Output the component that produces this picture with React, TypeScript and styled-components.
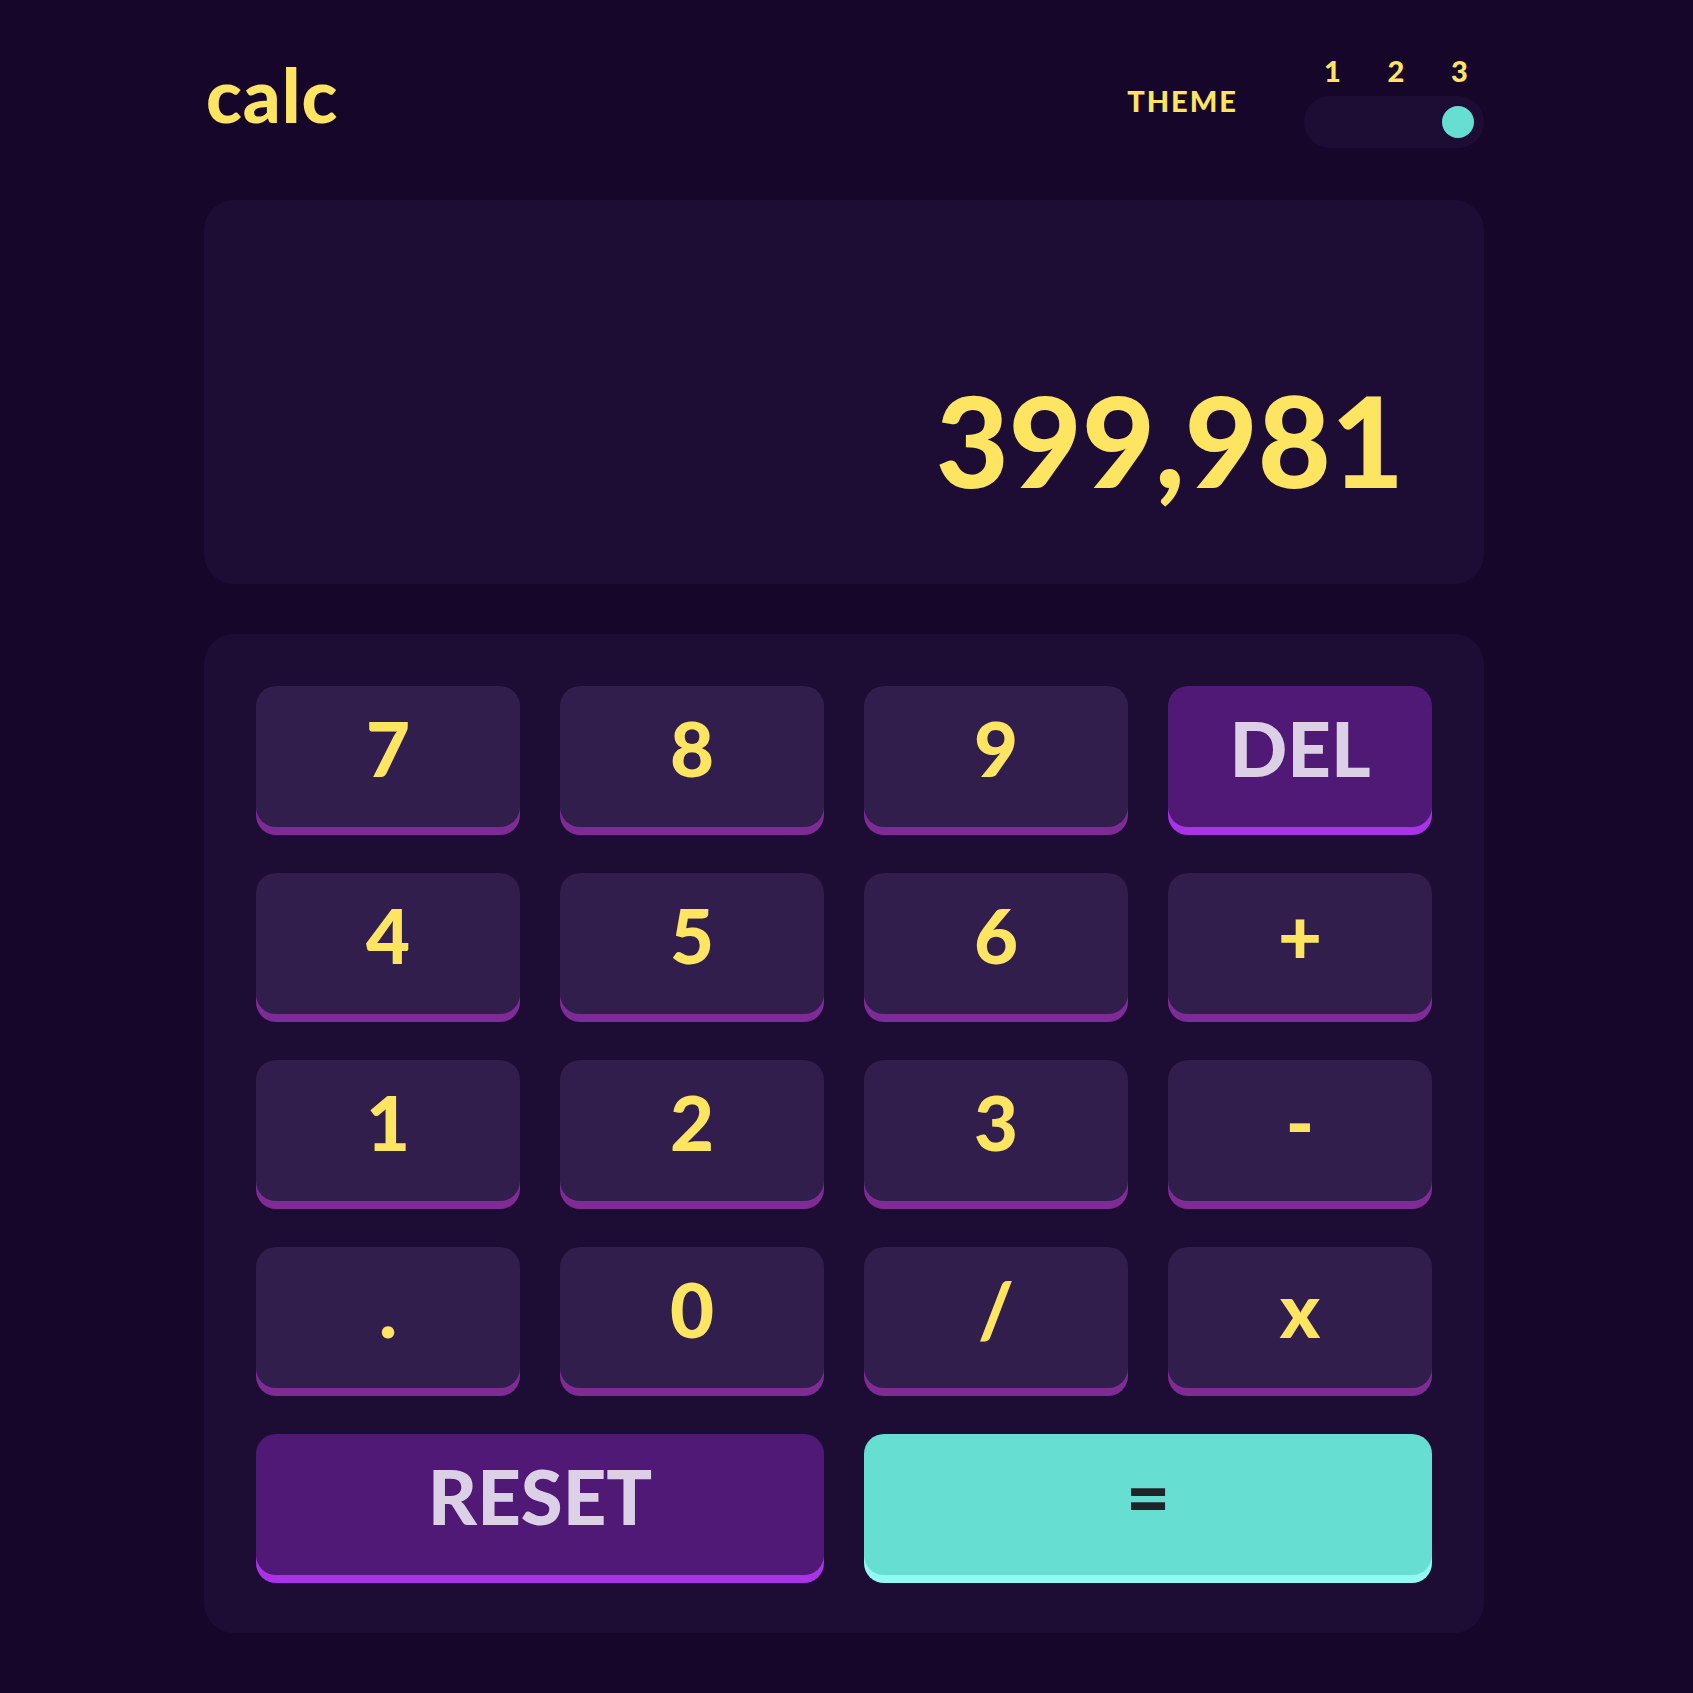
import React from "react";
import styled, { createGlobalStyle } from "styled-components";

const C = {
  page: "#16072a",
  panel: "#1d0c34",
  key: "#311e4c",
  keyShadow: "#7e2b96",
  accent: "#501975",
  accentShadow: "#aa33e8",
  accentText: "#dcd0e6",
  equals: "#66dfd2",
  equalsShadow: "#93f8f1",
  equalsText: "#1d2529",
  yellow: "#fde562",
};

const FONT = `"Lato", "Noto Sans", "Liberation Sans", sans-serif`;

const Global = createGlobalStyle`
  html, body { margin: 0; padding: 0; background: ${C.page}; }
  body { font-family: ${FONT}; }
  * { box-sizing: border-box; }
`;

const Page = styled.div`
  min-height: 1693px;
  background: ${C.page};
  padding: 48px 0 0 204px;
`;

const Calculator = styled.main`
  width: 1280px;
  display: flex;
  flex-direction: column;
`;

const Header = styled.header`
  display: flex;
  align-items: flex-end;
  justify-content: space-between;
  height: 100px;
  margin-bottom: 52px;
`;

const Logo = styled.h1`
  margin: 0 0 16px 2px;
  font-family: ${FONT};
  font-weight: 900;
  font-size: 74px;
  line-height: 1;
  letter-spacing: 1px;
  color: ${C.yellow};
`;

const ThemeGroup = styled.div`
  display: flex;
  align-items: flex-end;
  gap: 66px;
`;

const ThemeLabel = styled.span`
  margin-bottom: 33px;
  font-size: 29px;
  font-weight: 900;
  line-height: 1;
  letter-spacing: 2px;
  color: ${C.yellow};
`;

const Switcher = styled.div`
  display: flex;
  flex-direction: column;
  width: 180px;
`;

const NumRow = styled.div`
  display: flex;
  justify-content: space-between;
  padding: 0 17px 0 20px;
  margin-bottom: 11px;
`;

const Num = styled.span`
  width: 16px;
  text-align: center;
  font-size: 29px;
  font-weight: 900;
  line-height: 1;
  color: ${C.yellow};
`;

const Track = styled.div`
  height: 52px;
  border-radius: 26px;
  background: ${C.panel};
  display: flex;
  align-items: center;
  justify-content: flex-end;
  padding: 0 10px;
`;

const Knob = styled.span`
  width: 32px;
  height: 32px;
  border-radius: 50%;
  background: ${C.equals};
`;

const Screen = styled.section`
  height: 384px;
  border-radius: 30px;
  background: ${C.panel};
  display: flex;
  align-items: flex-end;
  justify-content: flex-end;
  padding: 0 80px 81px 0;
  margin-bottom: 50px;
`;

const Output = styled.output`
  font-size: 126px;
  font-weight: 900;
  line-height: 1;
  letter-spacing: 0;
  color: ${C.yellow};
`;

const Keypad = styled.section`
  border-radius: 30px;
  background: ${C.panel};
  padding: 52px 52px 58px;
  display: grid;
  grid-template-columns: repeat(4, 264px);
  grid-auto-rows: 141px;
  column-gap: 40px;
  row-gap: 46px;
`;

type Variant = "num" | "accent" | "equals";

const Key = styled.button<{ $variant?: Variant; $span?: number }>`
  grid-column: span ${(p) => p.$span ?? 1};
  border: none;
  border-radius: 20px;
  display: flex;
  align-items: center;
  justify-content: center;
  padding: 0 0 18px;
  font-family: ${FONT};
  font-weight: 900;
  font-size: 76px;
  line-height: 1;
  cursor: pointer;
  background: ${(p) =>
    p.$variant === "accent" ? C.accent : p.$variant === "equals" ? C.equals : C.key};
  color: ${(p) =>
    p.$variant === "accent"
      ? C.accentText
      : p.$variant === "equals"
      ? C.equalsText
      : C.yellow};
  box-shadow: 0 8px 0
    ${(p) =>
      p.$variant === "accent"
        ? C.accentShadow
        : p.$variant === "equals"
        ? C.equalsShadow
        : C.keyShadow};
`;

const keys: { label: string; variant?: Variant; span?: number }[] = [
  { label: "7" },
  { label: "8" },
  { label: "9" },
  { label: "DEL", variant: "accent" },
  { label: "4" },
  { label: "5" },
  { label: "6" },
  { label: "+" },
  { label: "1" },
  { label: "2" },
  { label: "3" },
  { label: "-" },
  { label: "." },
  { label: "0" },
  { label: "/" },
  { label: "x" },
  { label: "RESET", variant: "accent", span: 2 },
  { label: "=", variant: "equals", span: 2 },
];

export default function App() {
  return (
    <>
      <Global />
      <Page>
        <Calculator>
          <Header>
            <Logo>calc</Logo>
            <ThemeGroup>
              <ThemeLabel>THEME</ThemeLabel>
              <Switcher>
                <NumRow>
                  <Num>1</Num>
                  <Num>2</Num>
                  <Num>3</Num>
                </NumRow>
                <Track>
                  <Knob />
                </Track>
              </Switcher>
            </ThemeGroup>
          </Header>
          <Screen>
            <Output>399,981</Output>
          </Screen>
          <Keypad>
            {keys.map((k) => (
              <Key key={k.label} $variant={k.variant} $span={k.span}>
                {k.label}
              </Key>
            ))}
          </Keypad>
        </Calculator>
      </Page>
    </>
  );
}
